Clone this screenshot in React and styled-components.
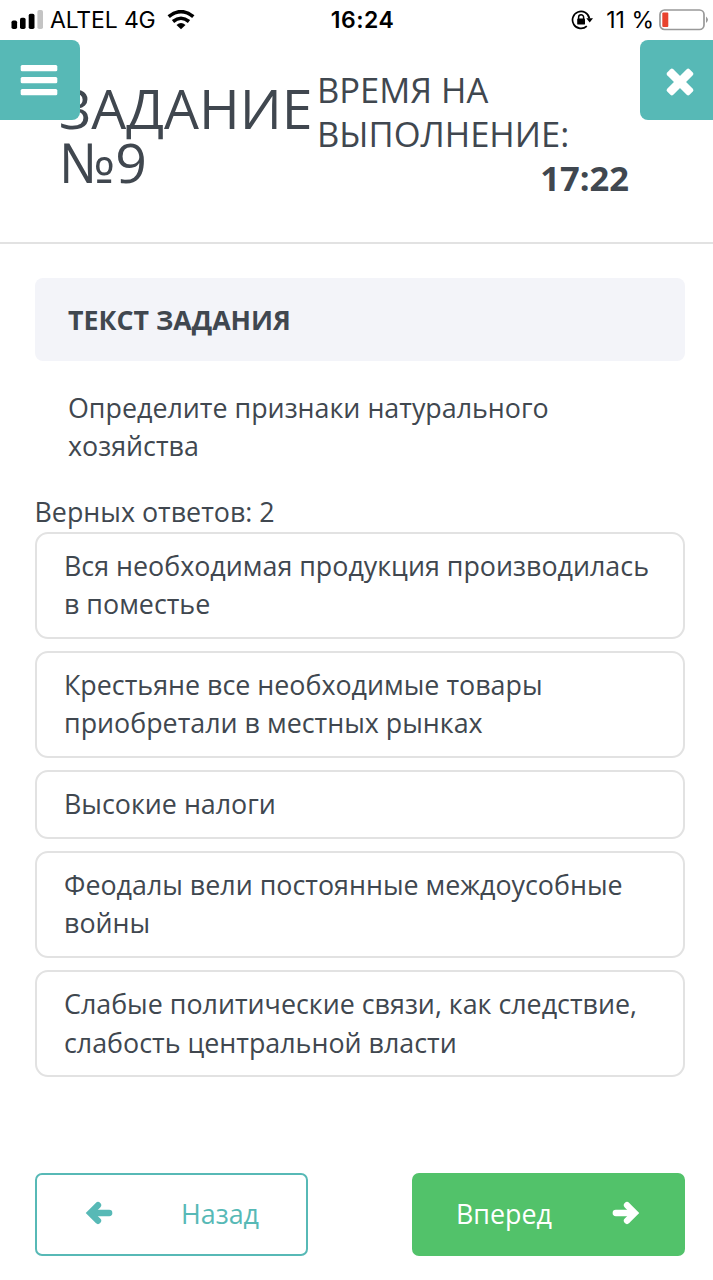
import React from "react";
import styled, { createGlobalStyle } from "styled-components";

const colors = {
  teal: "#57b9b6",
  green: "#52c26a",
  text: "#40474f",
  line: "#e2e2e2",
  panel: "#f3f4f9",
  white: "#ffffff",
};

const GlobalStyle = createGlobalStyle`
  * {
    box-sizing: border-box;
  }
  body {
    margin: 0;
    background: ${colors.white};
    color: ${colors.text};
    font-family: "Open Sans", "Noto Sans", sans-serif;
  }
`;

const Screen = styled.div`
  display: flex;
  flex-direction: column;
  width: 713px;
  height: 1280px;
  overflow: hidden;
`;

const StatusBar = styled.div`
  display: grid;
  grid-template-columns: 1fr auto 1fr;
  align-items: center;
  height: 40px;
  padding: 0 4px 0 11px;
  color: #000;
  font-family: Inter, "Liberation Sans", sans-serif;
  font-size: 23px;
  line-height: 40px;
  white-space: nowrap;
`;

const StatusGroup = styled.div`
  display: flex;
  align-items: center;
  justify-content: ${(props) => (props.$end ? "flex-end" : "flex-start")};
`;

const Carrier = styled.span`
  margin: 0 11px 0 7px;
  letter-spacing: -0.15px;
`;

const Clock = styled.span`
  padding-left: 5px;
  font-weight: 600;
  letter-spacing: 0.5px;
`;

const Battery = styled.span`
  margin: 0 5px 0 13px;
`;

const Header = styled.header`
  position: relative;
  display: flex;
  align-items: flex-start;
  height: 204px;
  padding: 0 84px 0 59px;
  border-bottom: 2px solid ${colors.line};
`;

const CornerButton = styled.button`
  position: absolute;
  top: 0;
  ${(props) => props.$side}: 0;
  display: flex;
  align-items: center;
  justify-content: center;
  width: ${(props) => (props.$side === "left" ? 80 : 73)}px;
  height: 80px;
  padding: ${(props) => (props.$side === "left" ? "0 2px 0 0" : "3px 0 0 6px")};
  border: 0;
  border-radius: ${(props) =>
    props.$side === "left" ? "0 8px 8px 0" : "8px 0 0 8px"};
  background: ${colors.teal};
`;

const Title = styled.h1`
  width: 258px;
  margin: 41px 0 0;
  font-size: 55.3px;
  font-weight: 400;
  line-height: 53.5px;
`;

const Timer = styled.div`
  flex: 1;
  margin-top: 28px;
  font-size: 34.5px;
  line-height: 44px;
`;

const TimeLeft = styled.div`
  font-weight: 700;
  text-align: right;
`;

const Content = styled.main`
  display: flex;
  flex-direction: column;
  flex: 1;
  padding: 34px 28px 24px 35px;
  font-size: 26.83px;
  line-height: 38.4px;
`;

const SectionTitle = styled.h2`
  margin: 0;
  padding: 22px 33px;
  border-radius: 8px;
  background: ${colors.panel};
  font-size: 26.75px;
  font-weight: 700;
  line-height: 39px;
`;

const Question = styled.p`
  margin: 28px 0 27px;
  padding: 0 33px;
`;

const AnswerCount = styled.div`
  margin-left: -0.5px;
`;

const Answers = styled.div`
  display: flex;
  flex-direction: column;
  gap: 12.4px;
  margin-top: 0.6px;
`;

const Answer = styled.div`
  padding: 13px 27px;
  border: 2px solid ${colors.line};
  border-radius: 13px;
`;

const Nav = styled.nav`
  display: flex;
  justify-content: space-between;
  margin-top: auto;
`;

const NavButton = styled.button`
  display: flex;
  align-items: center;
  justify-content: space-between;
  width: 273px;
  height: 83px;
  padding: ${(props) => (props.$primary ? "0 43px 0 42px" : "0 47px 0 48px")};
  border: 2px solid ${(props) => (props.$primary ? colors.green : colors.teal)};
  border-radius: 7px;
  background: ${(props) => (props.$primary ? colors.green : colors.white)};
  color: ${(props) => (props.$primary ? colors.white : colors.teal)};
  font: inherit;

  svg {
    margin-bottom: 3px;
  }
`;

const SignalIcon = () => (
  <svg width="32" height="20" viewBox="0 0 32 20">
    <rect x="0.5" y="10.5" width="5.6" height="8.5" rx="1.8" />
    <rect x="9" y="7.700" width="5.600" height="11.300" rx="1.800" />
    <rect x="17.700" y="3.800" width="5.800" height="15.200" rx="1.800" />
    <rect x="26.400" y="0" width="5.600" height="19" rx="1.800" fill="#c4c4c4" />
  </svg>
);

const WifiIcon = () => (
  <svg width="28" height="20" viewBox="0 0 28 20" fill="none" stroke="#000">
    <path d="M1.700 6.600Q14-3.200 26.300 6.600" strokeWidth="3.700" />
    <path d="M6 11.500Q14 5 22 11.500" strokeWidth="3.600" />
    <path d="M9.500 15Q14 11.200 18.500 15L14 19.300Z" fill="#000" stroke="none" />
  </svg>
);

const RotationLockIcon = () => (
  <svg width="22" height="20" viewBox="0 0 22 20" fill="none" stroke="#000">
    <path d="M18.400 8.500A8.500 8.500 0 1 0 15.800 16.200" strokeWidth="1.700" />
    <path d="M15.300 8.300H22L18.700 12.500Z" fill="#000" stroke="none" />
    <path d="M7.600 9V7.200a2.500 2.500 0 0 1 5 0V9" strokeWidth="1.500" />
    <rect x="6.200" y="8.600" width="7.800" height="6" rx="0.900" fill="#000" stroke="none" />
  </svg>
);

const BatteryIcon = () => (
  <svg width="50" height="22" viewBox="0 0 50 22">
    <rect x="1" y="1" width="44" height="19.500" rx="4.500" fill="none" stroke="#999" strokeWidth="1.700" />
    <rect x="3.300" y="3.500" width="6" height="14.500" rx="1" fill="#e8432e" />
    <path d="M47 7.500Q51 10.800 47 14Z" fill="#999" />
  </svg>
);

const BarsIcon = () => (
  <svg width="38" height="32" viewBox="0 0 38 32" fill="#fff">
    <rect x="0.700" y="1" width="36.600" height="6.200" rx="1.500" />
    <rect x="0.700" y="13" width="36.600" height="6.200" rx="1.500" />
    <rect x="0.700" y="25" width="36.600" height="6.200" rx="1.500" />
  </svg>
);

const CloseIcon = () => (
  <svg width="30" height="30" viewBox="0 0 30 30" fill="#fff">
    <rect x="-0.800" y="10.700" width="31.600" height="8.600" rx="2" transform="rotate(45 15 15)" />
    <rect x="-0.800" y="10.700" width="31.600" height="8.600" rx="2" transform="rotate(-45 15 15)" />
  </svg>
);

const ArrowIcon = ({ flip }) => (
  <svg
    width="28"
    height="24"
    viewBox="0 0 28 24"
    fill="none"
    stroke="currentColor"
    strokeWidth="6.300"
    strokeLinecap="round"
  >
    <g transform={flip ? "translate(28 0) scale(-1 1)" : undefined}>
      <path d="M3.800 12H20" />
      <path d="M15 4.200L22.800 12L15 19.800" strokeLinejoin="miter" />
    </g>
  </svg>
);

const answers = [
  "Вся необходимая продукция производилась в поместье",
  "Крестьяне все необходимые товары приобретали в местных рынках",
  "Высокие налоги",
  "Феодалы вели постоянные междоусобные войны",
  "Слабые политические связи, как следствие, слабость центральной власти",
];

const App = () => {
  return (
    <Screen>
      <GlobalStyle />
      <StatusBar>
        <StatusGroup>
          <SignalIcon />
          <Carrier>ALTEL 4G</Carrier>
          <WifiIcon />
        </StatusGroup>
        <Clock>16:24</Clock>
        <StatusGroup $end>
          <RotationLockIcon />
          <Battery>11 %</Battery>
          <BatteryIcon />
        </StatusGroup>
      </StatusBar>
      <Header>
        <Title>ЗАДАНИЕ №9</Title>
        <Timer>
          ВРЕМЯ НА ВЫПОЛНЕНИЕ:
          <TimeLeft>17:22</TimeLeft>
        </Timer>
        <CornerButton $side="left">
          <BarsIcon />
        </CornerButton>
        <CornerButton $side="right">
          <CloseIcon />
        </CornerButton>
      </Header>
      <Content>
        <SectionTitle>ТЕКСТ ЗАДАНИЯ</SectionTitle>
        <Question>Определите признаки натурального хозяйства</Question>
        <AnswerCount>Верных ответов: 2</AnswerCount>
        <Answers>
          {answers.map((answer) => (
            <Answer key={answer}>{answer}</Answer>
          ))}
        </Answers>
        <Nav>
          <NavButton>
            <ArrowIcon flip />
            Назад
          </NavButton>
          <NavButton $primary>
            Вперед
            <ArrowIcon />
          </NavButton>
        </Nav>
      </Content>
    </Screen>
  );
};

export default App;
